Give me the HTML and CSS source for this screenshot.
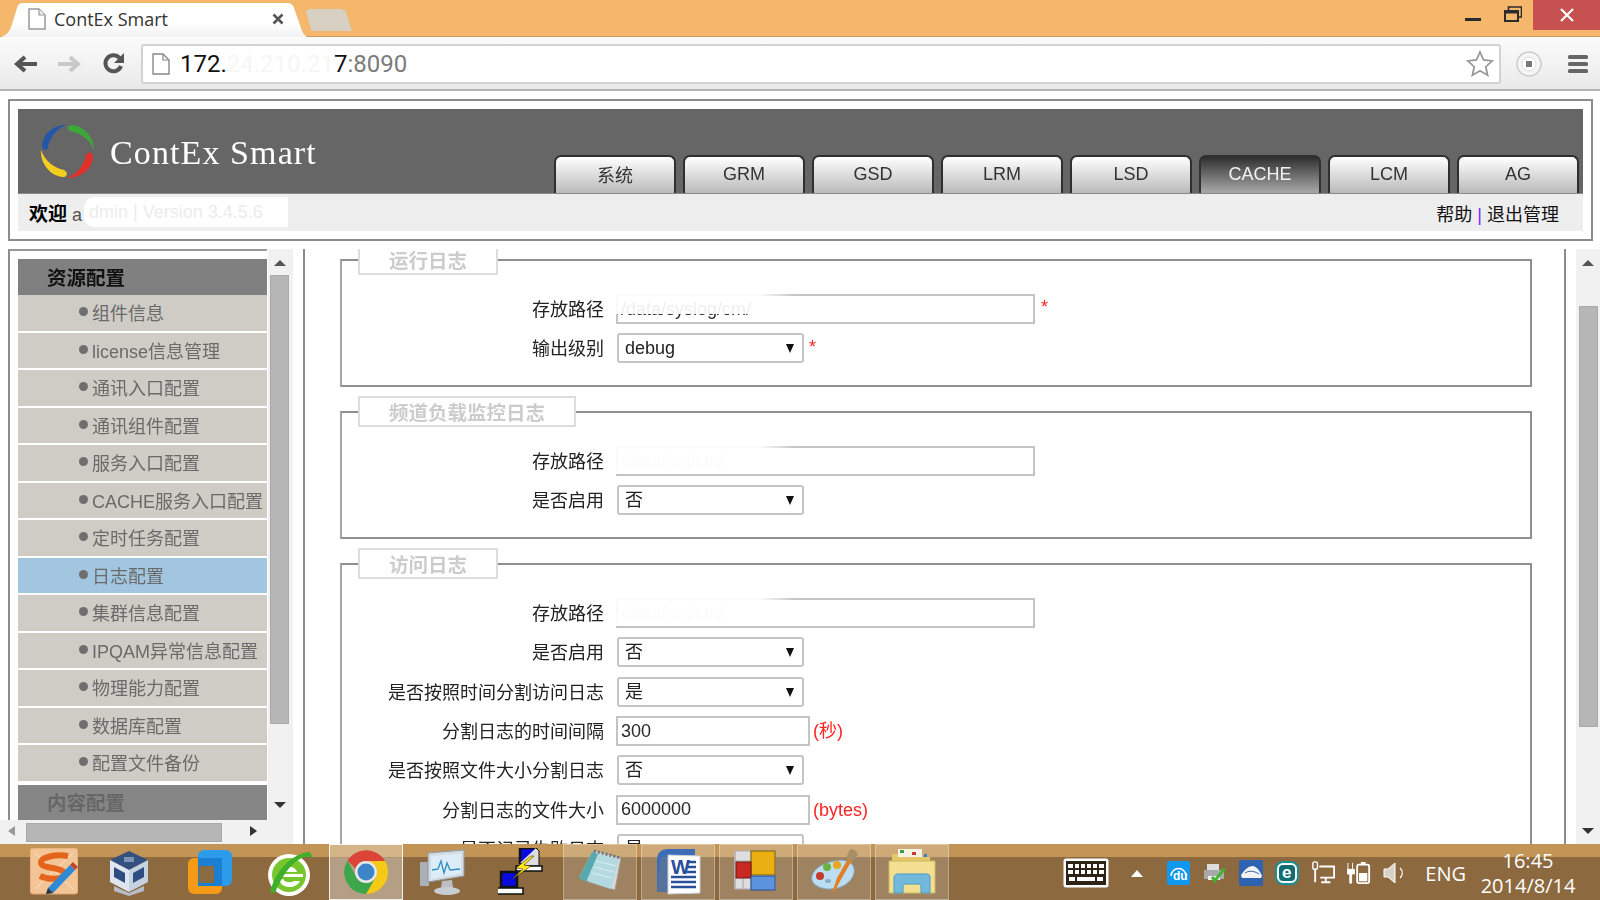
FILE: index.html
```html
<!DOCTYPE html>
<html lang="zh-CN">
<head>
<meta charset="utf-8">
<title>ContEx Smart</title>
<link rel="stylesheet" href="styles.css">
</head>
<body>
<div class="titlebar">
  <div class="tab">
    <svg class="tab-doc" viewBox="0 0 18 22"><path d="M1 1h10l6 6v14H1z" fill="#fff" stroke="#999" stroke-width="1.5"/><path d="M11 1v6h6" fill="#eee" stroke="#999" stroke-width="1.2"/></svg>
    <span class="tab-title">ContEx Smart</span>
    <svg class="tab-close" viewBox="0 0 12 12"><path d="M1.5 1.5l9 9M10.5 1.5l-9 9" stroke="#555" stroke-width="2.6"/></svg>
  </div>
  <div class="newtab"></div>
  <div class="winctl">
    <svg class="win-min" viewBox="0 0 16 3"><rect width="16" height="3" fill="#2b2b2b"/></svg>
    <svg class="win-max" viewBox="0 0 18 16"><path d="M1 5h13v10H1z" fill="none" stroke="#2b2b2b" stroke-width="2"/><path d="M1 6.5h13" stroke="#2b2b2b" stroke-width="2"/><path d="M4.5 4V1h13v10H15" fill="none" stroke="#2b2b2b" stroke-width="1.6"/></svg>
    <div class="win-close"><svg viewBox="0 0 14 14" width="14" height="14"><path d="M1 1l12 12M13 1L1 13" stroke="#fff" stroke-width="2.2"/></svg></div>
  </div>
</div>
<div class="toolbar">
  <svg class="nav nav-first" viewBox="0 0 24 20"><path d="M23 10H5M11 3l-8 7 8 7" fill="none" stroke="#555" stroke-width="4"/></svg>
  <svg class="nav" viewBox="0 0 24 20"><path d="M1 10h18M13 3l8 7-8 7" fill="none" stroke="#c9c9c9" stroke-width="4"/></svg>
  <svg class="nav nav-reload" viewBox="0 0 24 24"><path d="M19 14a8 8 0 1 1-1.5-8" fill="none" stroke="#555" stroke-width="4"/><path d="M22 1v10H12z" fill="#555"/></svg>
  <div class="omnibox">
    <svg class="omni-doc" viewBox="0 0 18 22"><path d="M1 1h10l6 6v14H1z" fill="#fff" stroke="#888" stroke-width="1.4"/><path d="M11 1v6h6" fill="none" stroke="#888" stroke-width="1.2"/></svg>
    <span class="url">172.<span class="url-hidden">24.210.21</span>7<span class="url-port">:8090</span></span>
    <svg class="star" viewBox="0 0 28 28"><path d="M14 2l3.6 8 8.6.9-6.4 5.8 1.8 8.5L14 20.8l-7.6 4.4 1.8-8.5L1.800 10.900l8.600-.9z" fill="#fff" stroke="#999" stroke-width="1.8"/></svg>
  </div>
  <svg class="ext" viewBox="0 0 26 26"><circle cx="13" cy="13" r="12" fill="#f6f6f6" stroke="#ccc" stroke-width="1.5"/><circle cx="13" cy="13" r="7" fill="#fff" stroke="#ddd"/><rect x="10" y="10" width="6" height="6" fill="#777"/></svg>
  <svg class="menu" viewBox="0 0 20 20"><rect y="1" width="20" height="4" rx="1.500" fill="#666"/><rect y="8" width="20" height="4" rx="1.500" fill="#666"/><rect y="15" width="20" height="4" rx="1.500" fill="#666"/></svg>
</div>

<div class="page">
  <header class="head">
    <div class="head-top">
      <svg class="logo" viewBox="0 0 55 55">
        <path d="M26 1C14 1 3 9 2 22c0 4 4 5 6 2C9 14 16 5 26 1z" fill="#2257a8"/>
        <path d="M54 26C54 13 44 2 32 1c-5 0-5 4-2 6 10 2 20 8 24 19z" fill="#3da83a"/>
        <path d="M27 54c13 0 25-8 26-21 0-5-5-6-7-2-2 10-8 18-19 23z" fill="#e0302a"/>
        <path d="M1 26c-1 13 9 26 22 27 5 0 5-5 1-7C14 44 5 37 1 26z" fill="#f2cf1f"/>
      </svg>
      <span class="brand">ContEx Smart</span>
      <nav class="tabs">
        <a class="nav-tab">系统</a><a class="nav-tab">GRM</a><a class="nav-tab">GSD</a><a class="nav-tab">LRM</a><a class="nav-tab">LSD</a><a class="nav-tab is-active">CACHE</a><a class="nav-tab">LCM</a><a class="nav-tab">AG</a>
      </nav>
    </div>
    <div class="head-bar">
      <span class="welcome"><b>欢迎</b> a<span class="welcome-mask">dmin | Version 3.4.5.6</span></span>
      <span class="links">帮助 <i>|</i> 退出管理</span>
    </div>
  </header>

  <main class="main">
    <aside class="side">
      <div class="side-row">
        <div class="tree">
          <div class="tree-head">资源配置</div>
          <div class="tree-item">组件信息</div>
          <div class="tree-item">license信息管理</div>
          <div class="tree-item">通讯入口配置</div>
          <div class="tree-item">通讯组件配置</div>
          <div class="tree-item">服务入口配置</div>
          <div class="tree-item">CACHE服务入口配置</div>
          <div class="tree-item">定时任务配置</div>
          <div class="tree-item is-current">日志配置</div>
          <div class="tree-item">集群信息配置</div>
          <div class="tree-item">IPQAM异常信息配置</div>
          <div class="tree-item">物理能力配置</div>
          <div class="tree-item">数据库配置</div>
          <div class="tree-item">配置文件备份</div>
          <div class="tree-head tree-head-off">内容配置</div>
        </div>
        <div class="vscroll vscroll-side">
          <span class="arr arr-up"></span>
          <span class="thumb"></span>
          <span class="arr arr-down"></span>
        </div>
      </div>
      <div class="hscroll">
        <span class="arr arr-left"></span>
        <span class="hthumb"></span>
        <span class="arr arr-right"></span>
      </div>
    </aside>

    <section class="content">
      <form class="form">
        <fieldset class="group">
          <legend>运行日志</legend>
          <div class="row"><label>存放路径</label><span class="field"><input class="in-long" value="/data/syslog/cm/"><span class="mask mask-top"></span></span><em class="req req-long">*</em></div>
          <div class="row"><label>输出级别</label><span class="sel"><select><option>debug</option></select></span><em class="req">*</em></div>
        </fieldset>
        <fieldset class="group">
          <legend>频道负载监控日志</legend>
          <div class="row"><label>存放路径</label><span class="field"><input class="in-long in-faint" value="/data/log/cm/"><span class="mask"></span></span></div>
          <div class="row"><label>是否启用</label><span class="sel"><select><option>否</option></select></span></div>
        </fieldset>
        <fieldset class="group">
          <legend>访问日志</legend>
          <div class="row"><label>存放路径</label><span class="field"><input class="in-long in-faint" value="/data/log/cm/"><span class="mask"></span></span></div>
          <div class="row"><label>是否启用</label><span class="sel"><select><option>否</option></select></span></div>
          <div class="row"><label>是否按照时间分割访问日志</label><span class="sel"><select><option>是</option></select></span></div>
          <div class="row"><label>分割日志的时间间隔</label><span class="field"><input class="in-short" value="300"></span><span class="unit">(秒)</span></div>
          <div class="row"><label>是否按照文件大小分割日志</label><span class="sel"><select><option>否</option></select></span></div>
          <div class="row"><label>分割日志的文件大小</label><span class="field"><input class="in-short" value="6000000"></span><span class="unit">(bytes)</span></div>
          <div class="row"><label>是否记录失败日志</label><span class="sel"><select><option>是</option></select></span></div>
        </fieldset>
      </form>
    </section>

    <div class="vscroll vscroll-main">
      <span class="arr arr-up"></span>
      <span class="thumb"></span>
      <span class="arr arr-down"></span>
    </div>
  </main>
</div>

<footer class="taskbar">
  <div class="apps">
    <div class="app"><svg viewBox="0 0 48 48"><rect x="0" y="0" width="48" height="46" rx="3" fill="#f3c596" stroke="#e0a468"/><path d="M5 5l38 36M43 5L5 41" stroke="#fbe4cc"/><path d="M38 8C26 6 10 9 11 15c1 6 24 4 23 11-1 6-16 6-24 2" fill="none" stroke="#e4641c" stroke-width="6"/><path d="M18 40l22-23 5 5-22 23-7 1z" fill="#2e8ad6"/><path d="M40 17l3-3 5 5-3 3z" fill="#c0472b"/><path d="M18 40l-2 6 7-1z" fill="#333"/></svg></div>
    <div class="app app-nudge-l"><svg viewBox="0 0 48 48"><path d="M9 38l15 7 15-7v5l-15 5-15-5z" fill="#b6bcc8"/><path d="M24 3L43 12 24 22 5 12z" fill="#33507f"/><path d="M5 12l19 10v22L5 34z" fill="#dfe6f0"/><path d="M43 12L24 22v22l19-10z" fill="#c6d1e2"/><path d="M9 19l11 6v10L9 29zM39 19l-11 6v10l11-6z" fill="#2f4d7e"/><path d="M19 9l10 0 0 5-10 0z" fill="#7d93b5"/></svg></div>
    <div class="app"><svg viewBox="0 0 48 48"><rect x="12" y="2" width="34" height="36" rx="6" fill="#2b9bea"/><rect x="2" y="10" width="34" height="36" rx="6" fill="#f59a16"/><path d="M12 10h24v28H12z" fill="#1b7fd1"/><rect x="13" y="18" width="15" height="17" fill="#8b6b42"/></svg></div>
    <div class="app app-nudge-r"><svg viewBox="0 0 48 48"><circle cx="22" cy="27" r="21" fill="#fff"/><circle cx="22" cy="27" r="17" fill="#77c62c"/><path d="M14 24h16c-2-7-14-7-16 0zM14 29h22v-3H14z" fill="#fff"/><path d="M16 31h-4c1 5 5 8 10 8 5 0 9-2 11-6h-6c-3 2-9 2-11-2z" fill="#fff"/><path d="M3 44C8 25 23 6 42 4c2 2 3 3 4 6C34 4 18 20 8 45z" fill="#3fae2a"/></svg></div>
    <div class="app is-open"><svg viewBox="0 0 48 48"><path d="M5.500 12.500A22 22 0 0 1 43 13H24a11 11 0 0 0-10.400 7.500z" fill="#db4437"/><path d="M43 13a22 22 0 0 1-19 33l9.500-16.500A11 11 0 0 0 24 13z" fill="#f7c917"/><path d="M24 46A22 22 0 0 1 5.500 12.500L14.500 29.500A11 11 0 0 0 33.500 29.500z" fill="#3da64a"/><circle cx="24" cy="24" r="11" fill="#e8e8e8"/><circle cx="24" cy="24" r="8.500" fill="#3c85c8"/></svg></div>
    <div class="app"><svg viewBox="0 0 48 48"><rect x="0" y="14" width="9" height="24" rx="1" fill="#aab0b6"/><path d="M8 5l36-3v26L8 34z" fill="#d5dbe2" stroke="#8d98a4"/><path d="M11 8l30-2.500v20L11 31z" fill="#dcecf8"/><path d="M12 22l6-1 3-8 3 12 3-10 3 7 10-1" fill="none" stroke="#2e8fc2" stroke-width="1.300"/><path d="M22 33l10-1 1 8H21z" fill="#b9bfc5"/><ellipse cx="27" cy="43" rx="13" ry="4" fill="#c8cdd2"/></svg></div>
    <div class="app"><svg viewBox="0 0 48 48"><path d="M22 0h16v15H22z" fill="#0a0ae0" stroke="#111" stroke-width="2.500"/><path d="M38 0l3 3v15H26l-4-3" fill="#ddd" stroke="#111"/><path d="M18 18h26v5H18z" fill="#fff" stroke="#111" stroke-width="1.500"/><path d="M3 24h16v15H3z" fill="#0a0ae0" stroke="#111" stroke-width="2.500"/><path d="M-1 40h26v6H-1z" fill="#fff" stroke="#111" stroke-width="1.500"/><path d="M33 8L18 20l7 1-12 11 20-14-7-1 10-9z" fill="#ffe81a" stroke="#111" stroke-width=".5"/></svg></div>
    <div class="app is-run"><svg viewBox="0 0 48 48"><path d="M18 2l27 8-6 32L12 34z" fill="#d8d8d8" stroke="#999"/><path d="M16 4l27 7-8 30L3 30z" fill="#b3dae0"/><path d="M3 30L16 4l6 2L10 34z" fill="#58a9ad"/><path d="M18 3l27 7" stroke="#777" stroke-width="3" stroke-dasharray="2 2"/><path d="M20 13l20 5M18 19l20 5M16 25l20 5" stroke="#d7eef2"/></svg></div>
    <div class="app is-run"><svg viewBox="0 0 48 48"><path d="M3 42V12C3 3 9 1 15 1h26v8H7z" fill="#3d6db6"/><path d="M3 44l37 0V4H15C8 4 3 8 3 16z" fill="#3d6db6" opacity=".75"/><path d="M14 7l32 1v37l-32 1z" fill="#fff" stroke="#c9d0da"/><text x="17" y="26" class="word-w">W</text><path d="M33 14h9M33 19h9M33 24h9M17 29h25M17 34h25M17 39h25" stroke="#2a4f99" stroke-width="2.500"/></svg></div>
    <div class="app is-run app-nudge-d"><svg viewBox="0 0 48 48"><path d="M3 1h40v38H3z" fill="#dedede" stroke="#aab" stroke-width="1"/><path d="M3 1v38M19 1v38M3 11h16M3 27h16M11 27v12" stroke="#b8b8b8" stroke-width="1.500"/><rect x="19" y="1" width="24" height="24" fill="#eab012" stroke="#7e5f0f" stroke-width="1"/><rect x="4" y="12" width="15" height="16" fill="#c72a22" stroke="#6e1612" stroke-width="1"/><rect x="19" y="26" width="24" height="14" fill="#5b93dc" stroke="#2b4f8e" stroke-width="1"/></svg></div>
    <div class="app is-run"><svg viewBox="0 0 48 48"><path d="M24 13c12-3 22 2 20 12-2 9-12 16-24 16S0 35 2 28c2-8 12-13 22-15z" fill="#bcdcf0" stroke="#85a9c2"/><circle cx="10" cy="28" r="4" fill="#c63a2c"/><circle cx="17" cy="19" r="4" fill="#6ab23f"/><circle cx="27" cy="17" r="4" fill="#eda41e"/><ellipse cx="18" cy="33" rx="3" ry="2" fill="#8aaec6"/><path d="M43 2l3 3-17 30-5 10-1-3 4-12z" fill="#e07f26"/><path d="M36 10l4-9c4 0 7 2 8 6l-6 6z" fill="#a79068"/></svg></div>
    <div class="app is-run"><svg viewBox="0 0 48 48"><path d="M4 6h18l2 3h18v8H4z" fill="#e4c768"/><path d="M10 1h24v8H10z" fill="#f7f3e4"/><rect x="12" y="2" width="4" height="3" fill="#3f9c41"/><rect x="24" y="4" width="4" height="3" fill="#c8392e"/><rect x="36" y="6" width="3" height="3" fill="#3a7fc4"/><path d="M1 13h46v32H1z" fill="#f3df91" stroke="#d2b85f"/><path d="M6 45V30c0-3 2-4 4-4h28c3 0 4 1 4 4v15H33v-6c0-2-1-3-3-3H18c-2 0-3 1-3 3v6z" fill="#72b9dc" stroke="#4c9ac4"/></svg></div>
  </div>
  <div class="tray">
    <svg class="t-kbd" viewBox="0 0 46 30"><rect x=".5" y=".5" width="45" height="29" rx="2.500" fill="#fff"/><rect x="3" y="3" width="40" height="24" fill="#2e2416"/><g fill="#fff"><rect x="5" y="6" width="5" height="4"/><rect x="12" y="6" width="4" height="4"/><rect x="18" y="6" width="4" height="4"/><rect x="24" y="6" width="4" height="4"/><rect x="30" y="6" width="4" height="4"/><rect x="36" y="6" width="5" height="4"/><rect x="5" y="12" width="5" height="4"/><rect x="12" y="12" width="4" height="4"/><rect x="18" y="12" width="4" height="4"/><rect x="24" y="12" width="4" height="4"/><rect x="30" y="12" width="4" height="4"/><rect x="36" y="12" width="5" height="4"/><rect x="6" y="19" width="6" height="4"/><rect x="14" y="19" width="18" height="4"/><rect x="34" y="19" width="6" height="4"/></g></svg>
    <svg class="t-up" viewBox="0 0 14 9"><path d="M7 1l6 7H1z" fill="#fff"/></svg>
    <span class="t-box"><svg viewBox="0 0 24 24"><rect width="23" height="24" rx="2" fill="#1097ee"/><path d="M4 15a7.500 7.500 0 0 1 15 0" fill="none" stroke="#fff" stroke-width="1.500"/><text x="6" y="19" class="du">du</text></svg></span>
    <span class="t-box"><svg viewBox="0 0 24 24"><path d="M4 3h12v6H4z" fill="#ddd"/><path d="M1 9h20v9H1z" fill="#a9a9a9"/><path d="M5 15h12v4H5z" fill="#eee"/><path d="M8 17l4 5 11-14-3-1-8 10-2-2z" fill="#42b333"/></svg></span>
    <span class="t-box"><svg viewBox="0 0 24 26"><rect width="24" height="26" rx="2" fill="#2d63b0"/><path d="M2 15c4-6 8-9 12-9 4 1 7 5 9 10l-1 2H3z" fill="#f2f2f2"/><path d="M6 13c3-2 8-3 14 1" stroke="#2d63b0" fill="none"/></svg></span>
    <span class="t-box"><svg viewBox="0 0 24 24"><rect x="1" y="1" width="22" height="22" rx="7" fill="#fff" stroke="#1c8e94" stroke-width="2"/><rect x="4" y="4" width="16" height="16" rx="4" fill="#106d72"/><text x="7" y="17" class="eset">e</text></svg></span>
    <span class="t-box"><svg viewBox="0 0 26 24"><rect x="2" y="0" width="5" height="8" rx="2" fill="none" stroke="#fff" stroke-width="1.500"/><path d="M4.500 8v14" stroke="#fff" stroke-width="2"/><path d="M9 5h16v12H10" fill="none" stroke="#fff" stroke-width="2"/><path d="M16 17v4M11 22h10" stroke="#fff" stroke-width="2"/></svg></span>
    <span class="t-box"><svg viewBox="0 0 26 24"><path d="M1 1v7M6 1v7M0 8h8v5H5v10H3V13H0z" fill="#fff" stroke="#fff"/><rect x="11" y="3" width="13" height="20" rx="2" fill="none" stroke="#fff" stroke-width="2"/><rect x="15" y="0" width="5" height="3" fill="#fff"/><rect x="13" y="12" width="9" height="9" fill="#fff"/></svg></span>
    <span class="t-box"><svg viewBox="0 0 24 24"><path d="M1 8h4l7-6v20l-7-6H1z" fill="#d8d2c6" stroke="#fff"/><path d="M17 7c3 3 3 7 0 10" fill="none" stroke="#fff" stroke-width="1.300"/></svg></span>
    <span class="t-eng">ENG</span>
    <div class="clock"><span>16:45</span><span>2014/8/14</span></div>
  </div>
</footer>
</body>
</html>
```

FILE: styles.css
```css
* { box-sizing: border-box; }
html, body { margin: 0; height: 900px; overflow: hidden; }
body {
  width: 1600px;
  display: flex;
  flex-direction: column;
  background: #fff;
  font: 18px "Liberation Sans", "Noto Sans CJK SC", sans-serif;
  color: #222;
}

/* browser chrome */
.titlebar {
  height: 37px;
  flex: none;
  display: flex;
  background: #f4b76c;
  border-bottom: 1px solid #c9995c;
}
.tab {
  width: 307px;
  height: 36px;
  margin-top: 1px;
  display: flex;
  align-items: center;
  background: linear-gradient(#fff, #fff 60%, #f2f2f2);
  clip-path: path("M0 36C8 34 10 30 13 20L17 7C18 3 20 2 24 2H286C290 2 293 3 294 7L300 24C302 31 304 34 307 36Z");
}
.tab-doc { width: 18px; height: 22px; margin-left: 28px; }
.tab-title { margin-left: 8px; width: 218px; font: 18px "Open Sans", sans-serif; color: #333; }
.tab-close { width: 12px; height: 12px; }
.newtab {
  width: 46px;
  height: 22px;
  margin: 9px 0 0 -1px;
  background: #d8d0c2;
  clip-path: polygon(0 10%, 8% 0, 78% 0, 86% 8%, 100% 100%, 12% 100%);
}
.winctl { margin-left: auto; display: flex; align-items: flex-start; }
.win-min { width: 16px; height: 3px; margin-top: 18px; }
.win-max { width: 18px; height: 16px; margin: 6px 11px 0 23px; }
.win-close {
  width: 67px;
  height: 30px;
  background: #c75050;
  display: flex;
  align-items: center;
  justify-content: center;
}
.toolbar {
  height: 54px;
  flex: none;
  display: flex;
  align-items: center;
  padding-top: 1px;
  background: linear-gradient(#fbfbfb, #f1f1f1 60%, #e9e9e9);
  border-bottom: 2px solid #b5b5b5;
}
.nav { width: 24px; height: 20px; margin-left: 19px; }
.nav-first { margin-left: 14px; }
.nav-reload { height: 24px; margin-left: 21px; margin-right: 15px; }
.omnibox {
  width: 1360px;
  height: 40px;
  display: flex;
  align-items: center;
  background: #fff;
  border: 2px solid #d2d2d2;
  border-radius: 3px;
}
.omni-doc { width: 18px; height: 22px; margin-left: 9px; }
.url { margin-left: 10px; font: 24px "Roboto", "Liberation Sans", sans-serif; color: #111; }
.url-hidden { color: #f6f6f6; }
.url-port { color: #7b7b7b; }
.star { width: 28px; height: 28px; margin-left: auto; margin-right: 5px; }
.ext { width: 26px; height: 26px; margin-left: 15px; }
.menu { width: 20px; height: 20px; margin-left: 26px; }

/* page */
.page {
  flex: 1;
  min-height: 0;
  display: flex;
  flex-direction: column;
  padding: 8px 0 0;
  overflow: hidden;
  filter: blur(.35px);
}
.head {
  flex: none;
  margin: 0 7px 0 8px;
  padding: 8px;
  border: 2px solid #8c8c8c;
}
.head-top {
  height: 84px;
  display: flex;
  align-items: flex-start;
  background: #666;
}
.logo { width: 55px; height: 55px; margin: 15px 0 0 22px; }
.brand {
  margin: 25px 0 0 15px;
  font: 34px "Liberation Serif", serif;
  letter-spacing: 1.100px;
  color: #fff;
}
.tabs { margin-left: auto; padding-right: 4px; align-self: flex-end; display: flex; gap: 7px; }
.nav-tab {
  width: 122px;
  height: 38px;
  padding-bottom: 2px;
  display: flex;
  align-items: center;
  justify-content: center;
  color: #333;
  background: linear-gradient(#fff, #b9b9b9);
  border: 2px solid #2f2f2f;
  border-bottom: 0;
  border-radius: 7px 7px 0 0;
}
.nav-tab.is-active {
  color: #f2f2f2;
  background: linear-gradient(#2f2f2f, #a9a9a9);
}
.head-bar {
  height: 38px;
  position: relative;
  display: flex;
  align-items: center;
  justify-content: space-between;
  padding: 0 24px 0 11px;
  background: #eee;
  border-top: 1px solid #888;
  color: #111;
}
.welcome { color: #555; }
.welcome b { font-size: 19px; font-weight: 700; color: #000; }
.welcome-mask {
  position: absolute;
  left: 66px;
  top: 3px;
  width: 204px;
  height: 30px;
  line-height: 30px;
  padding-left: 5px;
  background: #fff;
  color: #ececec;
  border-radius: 10px 0 0 10px;
}
.links i { font-style: normal; color: #7a2cff; }

.main { flex: 1; min-height: 0; display: flex; margin-top: 8px; }
.side { width: 285px; margin-left: 8px; flex: none; display: flex; flex-direction: column; }
.side-row { flex: 1; min-height: 0; display: flex; }
.tree {
  width: 260px;
  padding: 8px 0 0 8px;
  border-left: 2px solid #8c8c8c;
  border-top: 2px solid #999;
  overflow: hidden;
}
.tree-head {
  height: 36px;
  padding-left: 29px;
  line-height: 38px;
  font-size: 19.500px;
  font-weight: 700;
  color: #111;
  background: #808080;
}
.tree-head-off { height: 35px; margin-top: 4px; line-height: 36px; color: #666; background: #868686; }
.tree-item {
  height: 35.5px;
  margin-bottom: 2px;
  padding-left: 74px;
  line-height: 38px;
  white-space: nowrap;
  color: #6a6a6a;
  background: #cfccc5;
  position: relative;
}
.tree-item::before {
  content: "";
  position: absolute;
  left: 61px;
  top: 12px;
  width: 9px;
  height: 9px;
  border-radius: 50%;
  background: #6e6e6e;
}
.tree-item.is-current { background: #a3c6e0; }
.vscroll { flex: none; position: relative; background: #f1f1f1; }
.vscroll-side { width: 25px; margin-left: 1px; }
.vscroll-main { width: 24px; margin-left: 10px; }
.thumb { position: absolute; left: 2px; right: 4px; background: #b6b6b6; border: 1px solid #aaa; }
.vscroll-side .thumb { top: 26px; height: 449px; }
.vscroll-main .thumb { top: 57px; height: 421px; left: 3px; right: 2px; }
.arr { position: absolute; width: 0; height: 0; border-style: solid; border-color: transparent; }
.arr-up { top: 11px; left: 6px; border-width: 0 6px 6px; border-bottom-color: #555; }
.arr-down { bottom: 10px; left: 6px; border-width: 6px 6px 0; border-top-color: #333; }
.vscroll-side .arr-down { bottom: 12px; }
.hscroll { height: 24px; flex: none; position: relative; margin-left: -8px; background: #f1f1f1; }
.hthumb { position: absolute; left: 26px; top: 3px; width: 196px; height: 19px; background: #b6b6b6; border: 1px solid #aaa; }
.arr-left { left: 8px; top: 6px; border-width: 5px 7px 5px 0; border-right-color: #999; }
.arr-right { left: 250px; top: 6px; border-width: 5px 0 5px 7px; border-left-color: #333; }

.content {
  flex: 1;
  min-width: 0;
  margin-left: 10px;
  border-left: 2px solid #8c8c8c;
  border-right: 2px solid #8c8c8c;
  overflow: hidden;
}
.form { margin: -5px 32px 0 35px; }
.group {
  margin: 0 0 9.500px;
  padding: 19px 0 12px;
  min-width: 0;
  border: 2px solid #8f8f8f;
  border-left-color: #a5a5a5;
}
.group legend {
  margin-left: 16px;
  padding: 0 29px;
  height: 31px;
  line-height: 30px;
  font-size: 19.500px;
  font-weight: 700;
  color: #ccc;
  background: #fff;
  border: 2px solid #ddd;
}
.row { height: 39.300px; display: flex; align-items: flex-start; }
.row label {
  width: 262px;
  flex: none;
  margin-right: 12px;
  line-height: 33px;
  text-align: right;
  color: #222;
  white-space: nowrap;
}
.field { position: relative; display: block; }
input {
  display: block;
  height: 30px;
  padding: 0 3px;
  font: inherit;
  color: #2a2a2a;
  background: #fff;
  border: 2px solid #c4c4c4;
  border-radius: 0;
}
.in-long { width: 419px; }
.in-short { width: 194px; }
.in-faint { color: #c9c9c9; }
.mask {
  position: absolute;
  left: 0;
  top: 0;
  width: 180px;
  height: 28px;
  background: linear-gradient(90deg, rgba(255, 255, 255, .92) 80%, rgba(255, 255, 255, 0));
}
.mask-top { height: 20px; }
.sel { position: relative; display: block; margin-left: 1px; }
.sel::after {
  content: "";
  position: absolute;
  right: 10px;
  top: 11px;
  border-style: solid;
  border-width: 9px 4px 0;
  border-color: #111 transparent transparent;
}
select {
  display: block;
  width: 187px;
  height: 30px;
  padding: 0 0 0 6px;
  appearance: none;
  font: inherit;
  color: #222;
  background: #fff;
  border: 2px solid #c4c4c4;
  border-radius: 3px;
}
.req { margin: 4px 0 0 5px; font-style: normal; font-size: 18px; color: #f22; }
.req-long { margin-left: 6px; margin-top: 3px; }
.unit { margin: 0 0 0 3px; line-height: 30px; color: #f22; }

/* taskbar */
.taskbar {
  height: 56px;
  flex: none;
  display: flex;
  background: linear-gradient(#c29556 0, #c29556 13px, #8c693f 13px);
}
.apps { display: flex; gap: 4px; padding-left: 17px; }
.app {
  width: 74px;
  display: flex;
  align-items: center;
  justify-content: center;
  border: 1px solid transparent;
}
.app svg { width: 48px; height: 48px; }
.app-nudge-l svg { margin-left: -6px; }
.app-nudge-r svg { margin-left: 6px; }
.app-nudge-d svg { margin-top: 4px; }
.app.is-run {
  background: linear-gradient(rgba(255, 255, 255, .2) 0, rgba(255, 255, 255, .2) 13px, rgba(255, 255, 255, .17) 13px);
  border-color: rgba(255, 255, 255, .3);
}
.app.is-open {
  background: linear-gradient(rgba(255, 255, 255, .3) 0, rgba(255, 255, 255, .3) 13px, rgba(255, 255, 255, .36) 13px);
  border-color: rgba(255, 255, 255, .85);
}
.word-w { font: 700 20px "Liberation Sans", sans-serif; fill: #2a4f99; }
.du { font: 700 12px "Liberation Sans", sans-serif; fill: #fff; }
.eset { font: 700 17px "Liberation Sans", sans-serif; fill: #fff; }
.tray { margin-left: auto; display: flex; align-items: center; padding: 2px 24px 0 0; color: #fff; }
.t-kbd { width: 46px; height: 30px; margin-right: 21px; }
.t-up { width: 14px; height: 9px; margin-right: 17px; }
.t-box { width: 36px; height: 26px; display: flex; justify-content: center; }
.t-box svg { width: 24px; height: 26px; }
.t-eng { margin-left: 12px; font: 20px "Open Sans", sans-serif; color: #fff; }
.clock {
  width: 96px;
  margin: 0 0 0 14px;
  display: flex;
  flex-direction: column;
  align-items: center;
  font: 20px/25px "Open Sans", sans-serif;
  color: #fff;
}
```
